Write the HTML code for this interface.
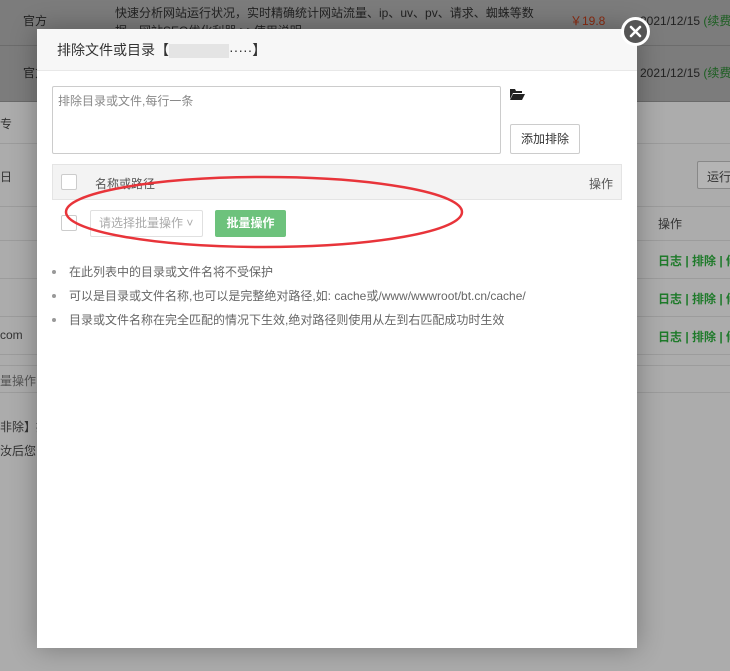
<!DOCTYPE html>
<html><head><meta charset="utf-8"><style>
*{margin:0;padding:0;box-sizing:border-box}
body{width:730px;height:671px;overflow:hidden;background:#acacac;position:relative;font-family:"Liberation Sans","Noto Sans CJK SC",sans-serif;font-size:12px;color:#333}
.a{position:absolute}
.top{left:0;top:0;width:730px;height:101px;background:#7c7c7c}
.hl{height:1px;background:#8e8e8e;left:0;width:730px}
.t{position:absolute;white-space:nowrap}
.modal{left:37px;top:29px;width:600px;height:619px;background:#fff;box-shadow:0 0 25px rgba(0,0,0,.3)}
.hd{height:42px;background:#f7f7f7;border-bottom:1px solid #e8e8e8;padding:0 0 0 20px;line-height:42px;font-size:14px;color:#333}
.g{color:#1e7a2a}
.li{position:absolute;left:15px;color:#666}
.li b{position:absolute;left:0;top:7px;width:4px;height:4px;border-radius:50%;background:#999}
.li span{position:absolute;left:17px;top:0;white-space:nowrap}
</style></head><body>
<div class="a top"></div>
<div class="a hl" style="top:45px;background:#6c6c6c"></div>
<div class="a hl" style="top:101px;background:#6a6a6a"></div>
<div class="t" style="left:23px;top:12px;color:#222">官方</div>
<div class="t" style="left:23px;top:64px;color:#222">官方</div>
<div class="t" style="left:115px;top:4px;color:#222">快速分析网站运行状况，实时精确统计网站流量、ip、uv、pv、请求、蜘蛛等数</div>
<div class="t" style="left:115px;top:22px;color:#222">据，网站SEO优化利器 &gt;&gt;使用说明</div>
<div class="t" style="left:570px;top:12px;color:#8a2a10">￥19.8</div>
<div class="t" style="left:640px;top:12px;color:#222">2021/12/15 <span style="color:#1b5e20">(续费</span></div>
<div class="t" style="left:640px;top:64px;color:#222">2021/12/15 <span style="color:#1b5e20">(续费</span></div>
<div class="a hl" style="top:143px;background:#9c9c9c"></div>
<div class="a hl" style="top:206px;background:#9c9c9c"></div>
<div class="a hl" style="top:240px;background:#9c9c9c"></div>
<div class="a hl" style="top:278px;background:#9c9c9c"></div>
<div class="a hl" style="top:316px;background:#9c9c9c"></div>
<div class="a hl" style="top:354px;background:#9c9c9c"></div>
<div class="a hl" style="top:365px;background:#9c9c9c"></div>
<div class="a hl" style="top:392px;background:#9c9c9c"></div>
<div class="t" style="left:0;top:115px">专</div>
<div class="t" style="left:0;top:168px">日</div>
<div class="t" style="left:0;top:328px">com</div>
<div class="t" style="left:0;top:372px;color:#555">量操作</div>
<div class="t" style="left:0;top:418px">非除】按</div>
<div class="t" style="left:0;top:442px">汝后您的</div>
<div class="a" style="left:697px;top:161px;width:40px;height:28px;border:1px solid #888;border-radius:2px;background:#b4b4b4"></div>
<div class="t" style="left:707px;top:168px">运行</div>
<div class="t" style="left:658px;top:215px">操作</div>
<div class="t g" style="left:658px;top:252px;font-weight:bold">日志 | 排除 | 修</div>
<div class="t g" style="left:658px;top:290px;font-weight:bold">日志 | 排除 | 修</div>
<div class="t g" style="left:658px;top:328px;font-weight:bold">日志 | 排除 | 修</div>

<div class="a modal">
<div class="hd">排除文件或目录【<span style="display:inline-block;width:60px;height:14px;background:#e4e4e4;vertical-align:middle"></span>·····】</div>
<div class="a" style="left:15px;top:57px;width:449px;height:68px;border:1px solid #ccc;border-radius:2px;padding:5px 5px;color:#888">排除目录或文件,每行一条</div>
<svg class="a" style="left:472px;top:59px" width="16" height="13" viewBox="0 0 16 13"><path d="M1 1h5l1 2h6v2H4L1 11z" fill="#222"/><path d="M4 6h12l-3 6H1z" fill="#222"/></svg>
<div class="a" style="left:473px;top:95px;width:70px;height:30px;border:1px solid #ccc;border-radius:2px;text-align:center;line-height:28px;color:#333">添加排除</div>
<div class="a" style="left:15px;top:135px;width:570px;height:36px;background:#f3f3f3;border:1px solid #e4e4e4"></div>
<div class="a" style="left:24px;top:145px;width:16px;height:16px;border:1px solid #ccc;background:#fff;border-radius:2px"></div>
<div class="t" style="left:58px;top:146px;color:#555">名称或路径</div>
<div class="t" style="left:552px;top:146px;color:#555">操作</div>
<div class="a" style="left:24px;top:186px;width:16px;height:16px;border:1px solid #ccc;border-radius:2px"></div>
<div class="a" style="left:53px;top:181px;width:113px;height:27px;border:1px solid #e0e0e0;border-radius:2px;line-height:25px;padding-left:8px;color:#aaa">请选择批量操作 ˅</div>
<div class="a" style="left:178px;top:181px;width:71px;height:27px;background:#6dc27c;border-radius:2px;color:#fff;font-weight:bold;text-align:center;line-height:27px">批量操作</div>
<svg class="a" style="left:25px;top:143px" width="405" height="80"><ellipse cx="202" cy="40" rx="198" ry="35" fill="none" stroke="#e8343a" stroke-width="2.5"/></svg>
<div class="li" style="top:234px"><b></b><span>在此列表中的目录或文件名将不受保护</span></div>
<div class="li" style="top:258px"><b></b><span>可以是目录或文件名称,也可以是完整绝对路径,如: cache或/www/wwwroot/bt.cn/cache/</span></div>
<div class="li" style="top:282px"><b></b><span>目录或文件名称在完全匹配的情况下生效,绝对路径则使用从左到右匹配成功时生效</span></div>
</div>
<div class="a" style="left:621px;top:17px;width:29px;height:29px;border-radius:50%;background:#555;border:3px solid #fff"></div>
<svg class="a" style="left:621px;top:17px" width="29" height="29"><path d="M10 10L19 19M19 10L10 19" stroke="#fff" stroke-width="2.5" stroke-linecap="round"/></svg>
</body></html>
